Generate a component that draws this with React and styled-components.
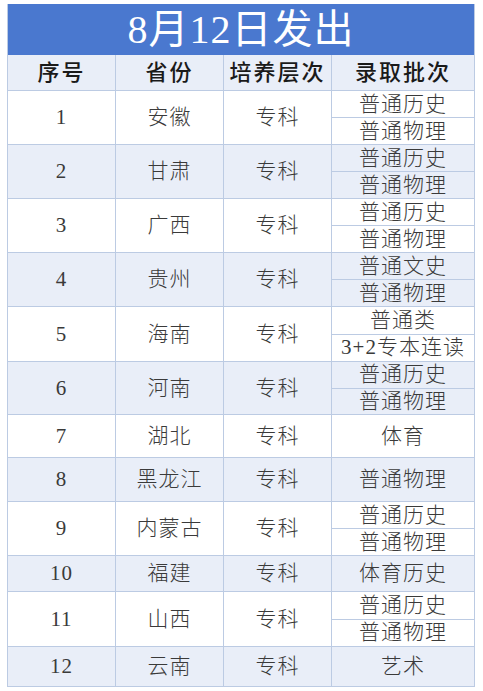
import React from "react";
import styled, { createGlobalStyle } from "styled-components";

const GlobalStyle = createGlobalStyle`
  body {
    margin: 0;
    background: #ffffff;
  }
`;

const Page = styled.div`
  padding: 4px 8px 4px 7px;
  font-family: "Liberation Serif", "Noto Sans CJK SC", serif;
`;

const Sheet = styled.div`
  width: 468px;
  border-left: 1px solid #bccbe3;
  border-right: 1px solid #bccbe3;
  box-sizing: border-box;
`;

const Title = styled.div`
  height: 51px;
  background: #4a78cf;
  color: #ffffff;
  font-size: 40px;
  line-height: 51px;
  text-align: center;
  letter-spacing: 1px;
  font-weight: 400;
`;

const Row = styled.div`
  display: grid;
  grid-template-columns: 108px 108px 108px 1fr;
  height: ${(p) => p.$h}px;
  background: ${(p) => (p.$alt ? "#e9eef8" : "#ffffff")};
  border-bottom: 1px solid #bccbe3;
  box-sizing: border-box;
`;

const Cell = styled.div`
  display: flex;
  align-items: center;
  justify-content: center;
  border-right: 1px solid #bccbe3;
  color: ${(p) => (p.$head ? "#1a1a1a" : "#3a3a3a")};
  font-size: ${(p) => (p.$head ? 22 : 21)}px;
  font-weight: ${(p) => (p.$head ? 500 : 300)};
  letter-spacing: ${(p) => (p.$head ? 2 : 1)}px;
  line-height: 1;
  white-space: nowrap;

  &:last-child {
    border-right: none;
  }
`;

const Stack = styled.div`
  display: flex;
  flex-direction: column;
  min-height: 0;
`;

const SubCell = styled.div`
  flex: 1 1 0;
  min-height: 0;
  display: flex;
  align-items: center;
  justify-content: center;
  color: #3a3a3a;
  font-size: 21px;
  font-weight: 300;
  letter-spacing: 1px;
  line-height: 1;
  white-space: nowrap;
  overflow: hidden;

  & + & {
    border-top: 1px solid #bccbe3;
  }
`;

const rows = [
  { n: "1", p: "安徽", b: ["普通历史", "普通物理"], h: 54 },
  { n: "2", p: "甘肃", b: ["普通历史", "普通物理"], h: 54 },
  { n: "3", p: "广西", b: ["普通历史", "普通物理"], h: 54 },
  { n: "4", p: "贵州", b: ["普通文史", "普通物理"], h: 54 },
  { n: "5", p: "海南", b: ["普通类", "3+2专本连读"], h: 55 },
  { n: "6", p: "河南", b: ["普通历史", "普通物理"], h: 53 },
  { n: "7", p: "湖北", b: ["体育"], h: 43 },
  { n: "8", p: "黑龙江", b: ["普通物理"], h: 44 },
  { n: "9", p: "内蒙古", b: ["普通历史", "普通物理"], h: 54 },
  { n: "10", p: "福建", b: ["体育历史"], h: 36 },
  { n: "11", p: "山西", b: ["普通历史", "普通物理"], h: 55 },
  { n: "12", p: "云南", b: ["艺术"], h: 40 },
];

const App = () => {
  return (
    <Page>
      <GlobalStyle />
      <Sheet>
        <Title>8月12日发出</Title>
        <Row $h={36} $alt>
          <Cell $head>序号</Cell>
          <Cell $head>省份</Cell>
          <Cell $head>培养层次</Cell>
          <Cell $head>录取批次</Cell>
        </Row>
        {rows.map((r, i) => (
          <Row key={r.n} $h={r.h} $alt={i % 2 === 1}>
            <Cell>{r.n}</Cell>
            <Cell>{r.p}</Cell>
            <Cell>专科</Cell>
            {r.b.length > 1 ? (
              <Stack>
                {r.b.map((t) => (
                  <SubCell key={t}>{t}</SubCell>
                ))}
              </Stack>
            ) : (
              <Cell>{r.b[0]}</Cell>
            )}
          </Row>
        ))}
      </Sheet>
    </Page>
  );
};

export default App;
